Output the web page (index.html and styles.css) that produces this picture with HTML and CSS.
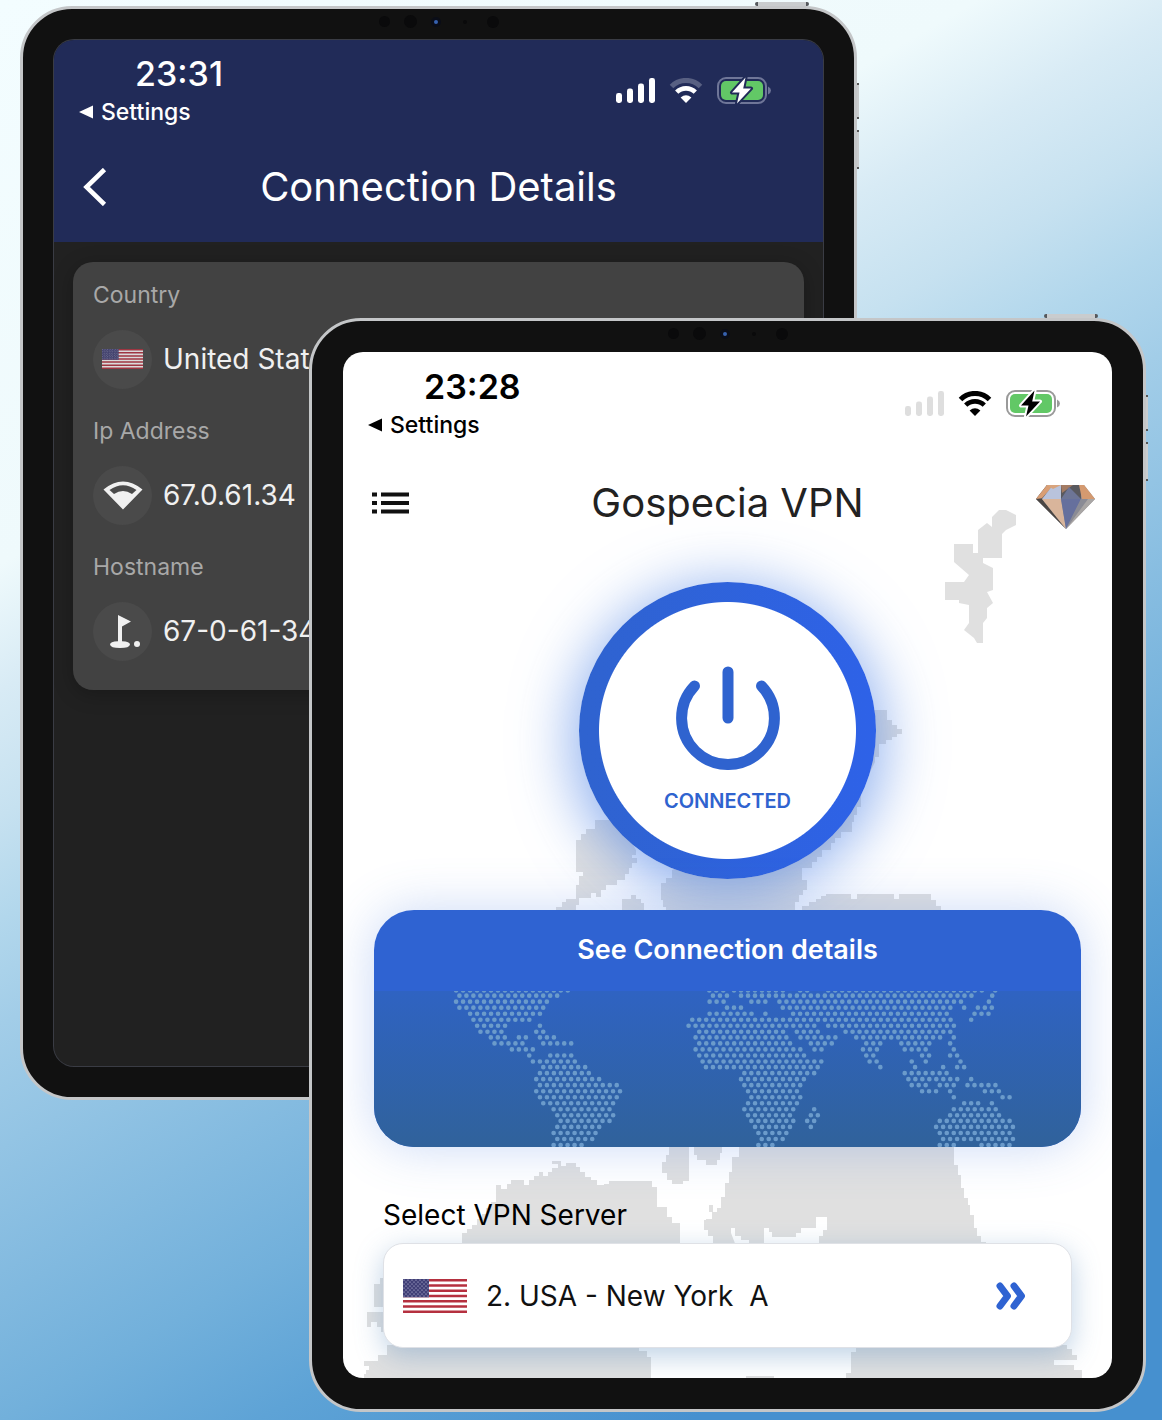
FILE: index.html
```html
<!DOCTYPE html>
<html lang="en">
<head>
<meta charset="utf-8">
<meta name="viewport" content="width=device-width, initial-scale=1">
<title>Gospecia VPN</title>
<link rel="stylesheet" href="styles.css">
</head>
<body>
<svg class="sprite" aria-hidden="true">
  <defs>
    <pattern id="stars" width="4" height="4" patternUnits="userSpaceOnUse">
      <circle cx="1" cy="1" r=".6" fill="#d5d4ea"/><circle cx="3" cy="3" r=".6" fill="#d5d4ea"/>
    </pattern>
  </defs>
  <symbol id="flag-us" viewBox="0 0 64 34" preserveAspectRatio="none">
    <rect width="64" height="34" fill="#fff"/>
    <path d="M0 1.3H64M0 6.5H64M0 11.8H64M0 17H64M0 22.2H64M0 27.5H64M0 32.7H64" stroke="#b5303f" stroke-width="2.6"/>
    <rect width="26" height="18.3" fill="#403f76"/>
    <rect width="26" height="18.3" fill="url(#stars)"/>
  </symbol>
  <symbol id="signal" viewBox="0 0 39 25">
    <rect x="0" y="15" width="6" height="10" rx="2.4"/><rect x="11" y="10.5" width="6" height="14.5" rx="2.4"/><rect x="22" y="5.5" width="6" height="19.5" rx="2.4"/><rect x="33" y="0" width="6" height="25" rx="2.4"/>
  </symbol>
  <symbol id="wifi" viewBox="0 0 34 25">
    <path class="wifi-outer" d="M2.5 8.4A20.500 20.500 0 0 1 31.5 8.4" fill="none" stroke="currentColor" stroke-width="5"/>
    <path d="M7.7 14.2A13.200 13.200 0 0 1 26.3 14.2" fill="none" stroke="currentColor" stroke-width="4.6"/>
    <path d="M17 25L11.6 19.5Q17 15.2 22.4 19.5Z"/>
  </symbol>
  <symbol id="battery" viewBox="0 0 54 27">
    <rect class="cell" x="1" y="1" width="48" height="25" rx="8" fill="none" stroke-width="2"/>
    <path class="knob" d="M51 9.5Q54 11 54 13.5T51 17.5Z"/>
    <rect x="4" y="4" width="42" height="19" rx="5" fill="#62c866"/>
    <path class="bolt" d="M28.5 .5L15 15.5H22.500L20 26.5L34 11.5H26.200Z" stroke-width="4" paint-order="stroke" stroke-linejoin="round"/>
  </symbol>
</svg>

<main class="stage">
  <section class="device device-back" aria-label="Connection details screen">
    <div class="bezel"><i class="lens"></i><i class="lens lens-lg"></i><i class="led"></i><i class="mic"></i><i class="lens lens-end"></i></div>
    <div class="screen screen-dark">
      <header class="topbar">
        <div class="status">
          <div class="status-left">
            <time class="clock">23:31</time>
            <a class="return" href="#settings"><svg class="caret" viewBox="0 0 14 14"><path d="M14 .5V13.5L0 7Z"/></svg>Settings</a>
          </div>
          <div class="status-icons">
            <svg class="i-signal"><use href="#signal"/></svg>
            <svg class="i-wifi"><use href="#wifi"/></svg>
            <svg class="i-battery"><use href="#battery"/></svg>
          </div>
        </div>
        <div class="appbar">
          <button class="icon-btn" type="button" aria-label="Back"><svg class="i-back" viewBox="0 0 24 38"><path d="M21.5 1.5L3.5 19L21.5 36.5" fill="none" stroke="currentColor" stroke-width="4.6"/></svg></button>
          <h1>Connection Details</h1>
        </div>
      </header>
      <dl class="details">
        <div class="detail">
          <dt>Country</dt>
          <dd><span class="badge"><svg class="flag-sm"><use href="#flag-us"/></svg></span>United States</dd>
        </div>
        <div class="detail">
          <dt>Ip Address</dt>
          <dd><span class="badge"><svg class="i-badge" viewBox="0 0 40 40"><path d="M20 34.5L.5 14.5Q20-1.5 39.5 14.5ZM6.5 15L11 19Q20 13 29 19L33.5 15Q20 5.500 6.5 15Z" fill-rule="evenodd"/></svg></span>67.0.61.34</dd>
        </div>
        <div class="detail">
          <dt>Hostname</dt>
          <dd><span class="badge"><svg class="i-badge" viewBox="0 0 40 40"><path d="M15 4L28 10.5L19 15.5V30.200Q27 30.5 27 33.5Q26.5 37 17 37T7 33.5Q7 30.5 15 30.200Z"/><circle cx="34" cy="33" r="3"/></svg></span>67-0-61-34</dd>
        </div>
      </dl>
    </div>
  </section>

  <section class="device device-front" aria-label="Home screen">
    <div class="bezel"><i class="lens"></i><i class="lens lens-lg"></i><i class="led"></i><i class="mic"></i><i class="lens lens-end"></i></div>
    <div class="screen screen-light">
      <svg class="backdrop" viewBox="344 352 769 1026" preserveAspectRatio="none" aria-hidden="true">
        <path d="M993 517L1000 510H1007L1017 515V525L1007 530L1003 534V558H984V563L994 568V590L988 592L994 603L988 608V618L984 623V643H978L975 638L965 630L970 623V605L960 603V600H946V582H965L970 575L955 562V544H974V553H979V530L988 523L993 527Z"/>
        <path d="M800 700H873V710H888V720H893V725H898V729H903V734H898V737H893V740H887V744H880V757H876V762L862 790V807H858V815H855V822H853V832H842V838H836V843H832V850H823V857H818V862H813V868H803V880H808V890H804V895H800V902H796V912H667V907H664V900H662V883H667V878H673V870L740 840Z"/>
        <path d="M577 840H582V834H587V829H596V820H620L637 850V855H633V858H638V863H633V868H630V874H626V880H618V885H607V890H602V897H597V893H592V898H580V905H577V912H557V907H563V902H567V899H577V885H580V876H584V872H577Z"/>
        <path d="M623 912V899H632V895H637V899H642V903H645V912Z"/>
        <path d="M803 912V906H810V902H817V899H822V896H827V894H852V899H858V894H895V899H900V894H932V900H937V906H942V912Z"/>
        <path d="M463 1246V1233H468V1229H473V1225H478V1219H483V1214H487V1208H492V1202H497V1185H502V1189H508V1184H512V1180H525V1185H530V1180H535V1176H540V1172H544V1176H549V1172H553V1168H559V1164H553V1161H562V1166H567V1163H577V1167H581V1172H586V1177H592V1180H598V1185H605V1184H610V1181H653V1187H658V1207H668V1217H673V1223H681V1246Z"/>
        <path d="M670 1145V1155H667V1162H663V1173H668V1180H673V1184H684V1181H690V1145ZM695 1145V1155H698V1160H707V1165H718V1160H721V1153H723V1145Z"/>
        <path d="M740 1145V1157H733V1172H730V1183H726V1197H722V1208H718V1212H714V1205H710V1212H713V1219H707V1220H705V1230H709V1236H714V1246H737L732 1233V1228H736V1236H742V1240H750V1246H765V1228H770V1232H773V1237H797V1233H802V1228H817V1217H828V1230H824V1236H820V1246H987V1242H982V1236H978V1228H975V1215H971V1205H969V1198H965V1188H962V1175H959V1165H955V1145Z"/>
        <path d="M390 1278H381V1284H375V1307H390ZM390 1312H368V1327H372V1322H378V1327H382V1332H390Z"/>
        <path d="M388 1345V1355H379V1361H365V1366H370V1370H367V1374H365V1378H652V1357H648V1351H640V1345ZM857 1345V1352H852V1373H847V1378H1083V1370H1075V1365H1055V1360H1078V1355H1073V1349H1068V1345ZM747 1376H775V1378H747Z"/>
      </svg>
      <div class="content">
        <header class="topbar">
          <div class="status">
            <div class="status-left">
              <time class="clock">23:28</time>
              <a class="return" href="#settings"><svg class="caret" viewBox="0 0 14 14"><path d="M14 .5V13.5L0 7Z"/></svg>Settings</a>
            </div>
            <div class="status-icons">
              <svg class="i-signal"><use href="#signal"/></svg>
              <svg class="i-wifi"><use href="#wifi"/></svg>
              <svg class="i-battery"><use href="#battery"/></svg>
            </div>
          </div>
          <div class="appbar">
            <button class="icon-btn menu" type="button" aria-label="Menu"><svg class="i-menu" viewBox="0 0 37 22"><path d="M0 2.5H5M0 11H5M0 19.5H5M9 2.5H37M9 11H37M9 19.5H37" stroke="currentColor" stroke-width="4"/></svg></button>
            <h1>Gospecia VPN</h1>
            <button class="icon-btn premium" type="button" aria-label="Premium"><svg class="i-gem" viewBox="0 0 59 44">
              <path d="M11 0H48L59 14L30 44L0 14Z" fill="#8d8b90"/>
              <path d="M0 14L11 0L17 1L8 14Z" fill="#6b5c56"/>
              <path d="M11 0H18L6 13L0 14Z" fill="#d99e74"/>
              <path d="M17 0H25V14H6Z" fill="#b9c3dc"/>
              <path d="M11 0H25L17 4Z" fill="#d8a47e"/>
              <path d="M25 0H45L45 14H25Z" fill="#59595f"/>
              <path d="M25 0H37L26 8Z" fill="#a37b63"/>
              <path d="M25 14L33 2L45 14Z" fill="#6d7596"/>
              <path d="M43 0H48L59 14H46Z" fill="#d49a70"/>
              <path d="M0 14H6L30 44Z" fill="#4a4644"/>
              <path d="M6 14H25L30 44Z" fill="#d9b59b"/>
              <path d="M25 14H45L30 44Z" fill="#66709d"/>
              <path d="M45 14H52L30 44Z" fill="#8a8b95"/>
              <path d="M52 14H59L30 44Z" fill="#a9a6a5"/>
            </svg></button>
          </div>
        </header>

        <button class="power" type="button" aria-pressed="true">
          <svg class="i-power" viewBox="0 0 104 104"><path d="M18.5 20A46.400 46.400 0 1 0 85.5 20M52 6V52" fill="none" stroke="currentColor" stroke-width="11" stroke-linecap="round"/></svg>
          <span>CONNECTED</span>
        </button>

        <a class="map-card" href="#details">
          <span class="map-title">See Connection details</span>
          <svg class="dots" viewBox="105 304 2119 467" preserveAspectRatio="xMidYMin slice" aria-hidden="true">
            <path d="M352 302H687M362 318H657M352 336H626M362 354H616M394 372H604M404 390H573M415 408H500M603 408h1M425 426H490M592 426H615M456 443H500M540 443H563M603 443H647M467 461H553M613 461H699M519 479H584M571 497h1M634 497H699M582 515H709M613 532H740M603 550H751M592 568H782M603 586H834M592 604H845M603 622H834M613 640H824M644 658H814M655 676H824M665 693H814M655 711H782M644 729H772M655 747H762M644 765H730"/>
            <g transform="translate(1140)">
              <path d="M-30 302H24M44 302H210M242 302H272M326 302H794M826 302h1M-19 318H26M65 318H275M295 318H758M817 318h1M-29 336H15M96 336H140M180 336H740M807 336h1M23 354H67M190 354H693M733 354h1M774 354H818M-29 372H99M138 372h1M221 372H687M764 372H808M-81 390H693M754 390h1M-92 408H286M326 408H704M-60 426H192M232 426H297M378 426H693M-71 443H203M243 443H349M410 443H662M702 443h1M-60 461H213M274 461H339M440 461H484M545 461H630M691 461h1M-71 479H245M285 479H308M430 479H474M555 479H620M702 479h1M-60 497H255M440 497H463M607 497H630M691 497H714M-50 515H307M450 515H474M576 515h1M618 515h1M722 515h1M-40 532H297M482 532h1M586 532h1M670 532h1M712 532H735M75 550H287M555 550H683M65 568H255M566 568H714M754 568h1M75 586H245M576 586H620M660 586H704M743 586H829M86 604H234M607 604H651M691 604h1M795 604H839M96 622H245M702 622h1M848 622H871M86 640H234M733 640H777M816 640h1M75 658H224M284 658h1M702 658H829M86 676H213M274 676H297M691 676H839M96 693H224M263 693H286M660 693H870M107 711H213M274 711h1M649 711H881M117 729H203M660 729H870M127 747H192M670 747H881M117 765H161M660 765H704M785 765H870"/>
            </g>
          </svg>
        </a>

        <div class="server">
          <label for="server-picker">Select VPN Server</label>
          <button class="picker" id="server-picker" type="button" aria-haspopup="listbox">
            <svg class="flag-lg"><use href="#flag-us"/></svg>
            <span class="picker-name">2. USA - New York&nbsp; A</span>
            <svg class="i-chevrons" viewBox="0 0 30 28"><path d="M4 4L11.5 14L4 24M18 4L25.5 14L18 24" fill="none" stroke="currentColor" stroke-width="7" stroke-linecap="round" stroke-linejoin="round"/></svg>
          </button>
        </div>
      </div>
    </div>
  </section>
</main>
</body>
</html>
```
FILE: styles.css
```css
* { box-sizing: border-box; }

body {
  margin: 0;
  min-height: 100vh;
  font-family: Inter, "Liberation Sans", sans-serif;
  background: linear-gradient(150deg, #f3fdff 0%, #effafc 27%, #d8ebf5 33%, #c6e1f0 39%, #b2d7ec 44%, #a2cde8 49%, #72b0db 68%, #5ea3d6 75%, #4690cf 87%);
  overflow-x: hidden;
}

button, a { font: inherit; color: inherit; text-decoration: none; }
button { border: 0; padding: 0; background: none; cursor: pointer; }
h1, dl, dd { margin: 0; }
svg { display: block; fill: currentColor; }
.sprite { position: absolute; width: 0; height: 0; }

/* Two tablets share one grid cell so the front one overlaps the back one. */
.stage {
  display: grid;
  padding: 6px 16px 8px 20px;
}

.device {
  grid-area: 1 / 1;
  position: relative;
  display: flex;
  flex-direction: column;
  width: calc(100% - 289px);
  aspect-ratio: 837 / 1094;
  padding: 0 31px 31px;
  border: 3px solid #c4c6c8;
  border-radius: 52px;
  background: #111;
}
.device-back { align-self: start; }
.device-front { justify-self: end; margin-top: 312px; }

/* Power and volume keys on the tablet edge. */
.device::before, .device::after {
  content: "";
  position: absolute;
  background: #c9ccce;
}
.device::before {
  top: -7px;
  right: 45px;
  width: 48px;
  height: 4px;
  border: solid #55585c;
  border-width: 0 3px;
  border-radius: 2px;
}
.device::after {
  top: 74px;
  right: -5px;
  width: 2px;
  height: 86px;
  background: linear-gradient(#555 2px, #c9ccce 2px 34px, #555 34px 36px, transparent 36px 47px, #555 47px 49px, #c9ccce 49px 84px, #555 84px);
}

.bezel {
  display: flex;
  align-items: center;
  justify-content: center;
  gap: 14px;
  height: 31px;
  padding-bottom: 6px;
}
.lens, .led, .mic { border-radius: 50%; background: #0a0a0b; }
.lens { width: 11px; height: 11px; }
.lens-lg { width: 13px; height: 13px; }
.lens-end { width: 12px; height: 12px; margin-left: 6px; }
.led { width: 10px; height: 10px; border: 3px solid #0a0d18; background: #3762b0; }
.mic { width: 4px; height: 4px; margin-left: 8px; }

.screen {
  position: relative;
  flex: 1;
  border-radius: 20px;
  overflow: hidden;
}
.screen-dark {
  --cell: #6f7698;
  --bolt-edge: #212b58;
  --wifi-outer: .25;
  background: #212121;
  color: #fff;
  box-shadow: 0 0 0 1px #3a3c44;
}
.screen-light {
  --cell: #9a9a9a;
  --bolt-edge: #fff;
  --wifi-outer: 1;
  background: #fff;
  color: #000;
}

.status {
  display: flex;
  justify-content: space-between;
  padding: 14px 52px 0 25px;
  height: 92px;
}
.clock {
  display: block;
  padding-left: 56px;
  font-size: 34px;
  line-height: 40px;
  font-weight: 600;
}
.return {
  display: flex;
  align-items: center;
  gap: 8px;
  font-size: 23px;
  line-height: 36px;
  font-weight: 500;
}
.caret { width: 14px; height: 14px; }
.status-icons {
  display: flex;
  align-items: center;
  gap: 14px;
  height: 72px;
}
.i-signal { width: 39px; height: 25px; }
.i-wifi { width: 34px; height: 25px; }
.i-battery { width: 54px; height: 27px; }
.cell { stroke: var(--cell); }
.knob { fill: var(--cell); }
.bolt { stroke: var(--bolt-edge); }
.wifi-outer { opacity: var(--wifi-outer); }

.appbar {
  display: grid;
  grid-template-columns: 1fr auto 1fr;
  align-items: center;
  height: 110px;
  padding: 0 17px;
}
.appbar h1 {
  font-size: 40px;
  line-height: 48px;
  font-weight: 400;
}
.icon-btn { justify-self: start; padding-left: 12px; }
.premium { justify-self: end; }

.screen-dark .topbar { background: #212b58; }
.screen-dark .clock { font-weight: 500; }
.i-back { width: 24px; height: 38px; }

.details {
  margin: 20px 19px;
  padding: 16px 20px 10px;
  border-radius: 20px;
  background: #424242;
  box-shadow: 0 4px 20px rgba(0, 0, 0, .25);
}
.detail { padding-bottom: 22px; }
.detail:last-child { padding-bottom: 16px; }
.detail dt {
  padding-bottom: 13px;
  font-size: 23px;
  line-height: 35px;
  color: #a8a8a8;
}
.detail dd {
  display: flex;
  align-items: center;
  gap: 11px;
  height: 66px;
  font-size: 28px;
  color: #f0f0f0;
}
.badge {
  display: grid;
  place-items: center;
  width: 59px;
  height: 59px;
  border-radius: 50%;
  background: #4a4a4a;
}
.flag-sm { width: 41px; height: 20px; opacity: .8; }
.i-badge { width: 40px; height: 40px; }

/* Home screen */
.backdrop {
  position: absolute;
  inset: 0;
  width: 100%;
  height: 100%;
  fill: #e0e0e0;
}
.content {
  position: relative;
  display: flex;
  flex-direction: column;
}
.screen-light .status { padding-top: 15px; }
.screen-light .i-signal { fill: #dedede; }
.screen-light .appbar { height: 118px; color: #222; }
.i-menu { width: 37px; height: 22px; color: #111; }
.i-gem { width: 59px; height: 44px; margin-top: 8px; }

.power {
  align-self: center;
  display: flex;
  flex-direction: column;
  align-items: center;
  gap: 19px;
  width: 297px;
  height: 297px;
  margin-top: 20px;
  padding-top: 84px;
  border-radius: 50%;
  background:
    radial-gradient(circle closest-side, #fff 128px, transparent 129px),
    linear-gradient(90deg, #2f63cf, #2e62e8);
  box-shadow: 0 10px 60px 6px rgba(60, 118, 226, .6);
  color: #2f63cf;
  font-size: 20px;
  line-height: 24px;
  font-weight: 600;
}
.i-power { width: 104px; height: 104px; }

.map-card {
  display: flex;
  flex-direction: column;
  margin: 31px 31px 0;
  border-radius: 40px;
  overflow: hidden;
  background: #2f63d2;
  box-shadow: 0 0 50px rgba(80, 130, 225, .3);
  text-align: center;
}
.map-title {
  padding: 22px 0 23px;
  font-size: 27px;
  line-height: 36px;
  font-weight: 600;
  color: #fff;
}
.dots {
  width: 100%;
  height: 156px;
  background: linear-gradient(#2f63c2, #30629b);
  fill: none;
  stroke: #6b9bcb;
  stroke-width: 14;
  stroke-linecap: round;
  stroke-dasharray: 0 20.9;
}

.server {
  display: flex;
  flex-direction: column;
  padding: 50px 40px 0;
}
.server label {
  padding-bottom: 10px;
  font-size: 28px;
  line-height: 36px;
}
.picker {
  display: flex;
  align-items: center;
  height: 105px;
  padding: 0 45px 0 19px;
  border: 1px solid #dfe1e6;
  border-radius: 20px;
  background: #fff;
  box-shadow: 0 8px 28px rgba(90, 140, 190, .4);
  color: #111;
  text-align: left;
}
.flag-lg { width: 64px; height: 34px; }
.picker-name {
  flex: 1;
  padding-left: 19px;
  font-size: 28px;
  line-height: 36px;
}
.i-chevrons { width: 30px; height: 28px; color: #2f63d2; }
```
